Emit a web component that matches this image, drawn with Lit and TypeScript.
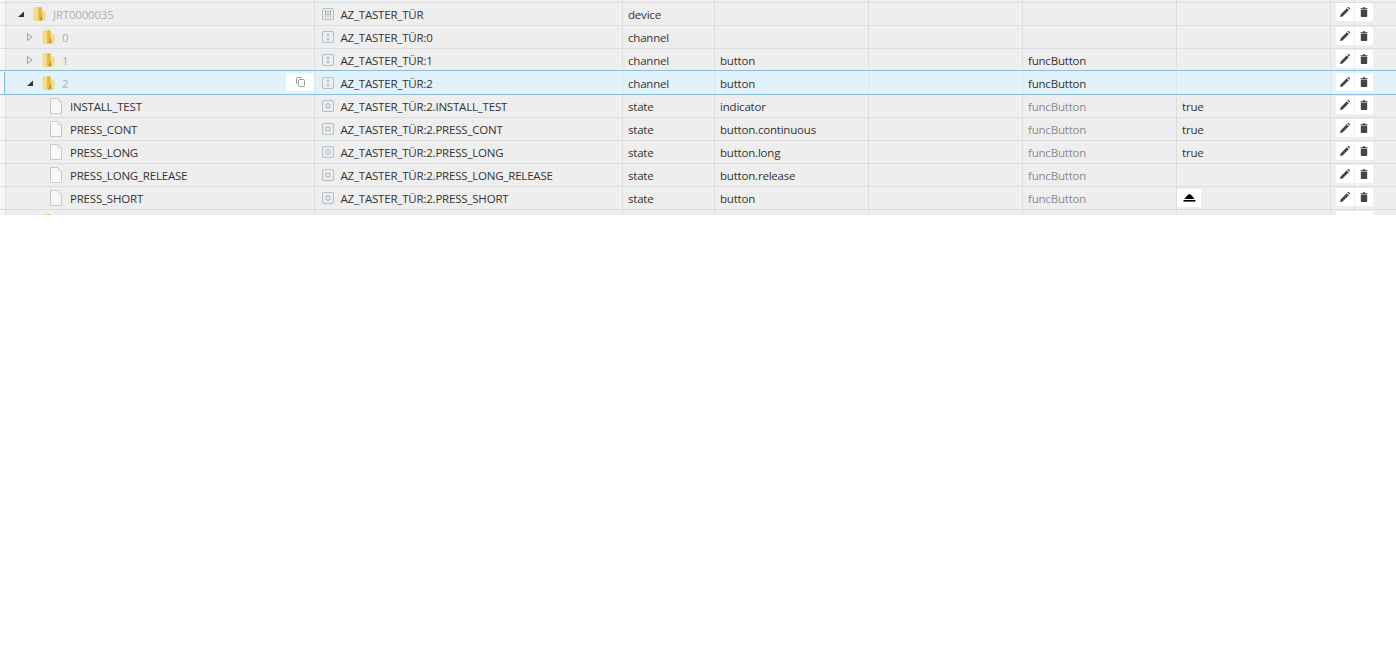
import { LitElement, html, css, svg } from "lit";
import { customElement } from "lit/decorators.js";

type Row = {
  level: number; kind: "device" | "folder" | "file"; open?: boolean; name: string;
  id: string; icon?: "device" | "channel" | "state"; type: string; role: string; func: string; dimFunc?: boolean; val: string;
  selected?: boolean; eject?: boolean;
};

const P = "AZ_TASTER_TÜR";
const rows: Row[] = [
  { level: 0, kind: "folder", open: true, name: "JRT0000035", id: P, icon: "device", type: "device", role: "", func: "", val: "" },
  { level: 1, kind: "folder", name: "0", id: P + ":0", icon: "channel", type: "channel", role: "", func: "", val: "" },
  { level: 1, kind: "folder", name: "1", id: P + ":1", icon: "channel", type: "channel", role: "button", func: "funcButton", val: "" },
  { level: 1, kind: "folder", open: true, name: "2", id: P + ":2", icon: "channel", type: "channel", role: "button", func: "funcButton", val: "", selected: true },
  { level: 2, kind: "file", name: "INSTALL_TEST", id: P + ":2.INSTALL_TEST", icon: "state", type: "state", role: "indicator", func: "funcButton", dimFunc: true, val: "true" },
  { level: 2, kind: "file", name: "PRESS_CONT", id: P + ":2.PRESS_CONT", icon: "state", type: "state", role: "button.continuous", func: "funcButton", dimFunc: true, val: "true" },
  { level: 2, kind: "file", name: "PRESS_LONG", id: P + ":2.PRESS_LONG", icon: "state", type: "state", role: "button.long", func: "funcButton", dimFunc: true, val: "true" },
  { level: 2, kind: "file", name: "PRESS_LONG_RELEASE", id: P + ":2.PRESS_LONG_RELEASE", icon: "state", type: "state", role: "button.release", func: "funcButton", dimFunc: true, val: "" },
  { level: 2, kind: "file", name: "PRESS_SHORT", id: P + ":2.PRESS_SHORT", icon: "state", type: "state", role: "button", func: "funcButton", dimFunc: true, val: "", eject: true },
  { level: 1, kind: "folder", name: "", id: "", type: "", role: "", func: "", val: "" },
];

const folder = svg`<svg class="ic" width="15" height="16" viewBox="0 0 15 17">
  <path d="M1 3.5 C1 2 2 1 3.5 1 L5 1 C6 1 6.5 2.5 6.5 3.5 L6.5 14 C6.5 15 5.5 16 4.5 16 L3 16 C1.5 16 1 14.5 1 13.5 Z" fill="#f3dc8a"/>
  <path d="M6 2 C7.5 .6 9.5 1 10 3 L10 15 C9 16.4 7 16.4 6 15 Z" fill="#e2b945"/>
  <path d="M10 5 C11.5 4.5 13.4 5 14 6.5 L14 13 C14 14.5 13 15.6 11.5 15.6 L9.5 15.6 Z" fill="#f2da88"/>
  <path d="M9.6 8 L10.6 15 L8.4 15 Z" fill="#a88a3a"/>
</svg>`;

const file = svg`<svg class="ic" width="12" height="16" viewBox="0 0 12 16">
  <path d="M.5 .5 H8 L11.5 4 V15.5 H.5 Z" fill="#f8f8f8" stroke="#c9c9c9"/>
  <path d="M8 .5 V4 H11.5" fill="none" stroke="#dcdcdc"/>
</svg>`;

const open = svg`<svg class="exp" width="8" height="8" viewBox="0 0 8 8"><path d="M7 1.5 V7 H1 Z" fill="#333"/></svg>`;
const closed = svg`<svg class="exp" width="8" height="8" viewBox="0 0 8 8"><path d="M1.5 .5 L6 4 L1.5 7.5 Z" fill="none" stroke="#a0a0a0"/></svg>`;

const typeIcon = (k?: string) => {
  const box = svg`<rect x=".5" y=".5" width="11" height="11" rx="1.5" fill="#e9eef0" stroke="#b4bec4"/>`;
  if (k === "device") return svg`<svg class="ti" width="12" height="12" viewBox="0 0 12 12">${box}
    <path d="M3.5 2.5V9.5M6 2.5V9.5M8.5 2.5V9.5" stroke="#76838b" stroke-dasharray="2 1"/></svg>`;
  if (k === "channel") return svg`<svg class="ti" width="12" height="12" viewBox="0 0 12 12">${box}
    <path d="M6 2.5V9.5" stroke="#8a969d" stroke-dasharray="3 1.5"/></svg>`;
  if (k === "state") return svg`<svg class="ti" width="12" height="12" viewBox="0 0 12 12">${box}
    <circle cx="6" cy="6" r="2.2" fill="none" stroke="#a8b2b8"/></svg>`;
  return "";
};

const pencil = svg`<svg width="10" height="10" viewBox="0 0 10 10"><path d="M0 10 L.6 7.4 L6.8 1.2 L8.8 3.2 L2.6 9.4 Z M7.4 .6 L8 0 Q8.4 -.2 8.8 0 L10 1.2 Q10.2 1.6 10 2 L9.4 2.6 Z" fill="#454545"/></svg>`;
const trash = svg`<svg width="8" height="10" viewBox="0 0 8 10"><path d="M.5 2 H7.5 V1.2 H5.4 L5 .2 H3 L2.6 1.2 H.5 Z M.8 2.6 H7.2 V9.2 Q7.2 10 6.4 10 H1.6 Q.8 10 .8 9.2 Z" fill="#454545"/></svg>`;
const copy = svg`<svg width="9" height="10" viewBox="0 0 9 10"><path d="M.5 7 V1.5 Q.5 .5 1.5 .5 H6" fill="none" stroke="#9a9a9a"/><rect x="2.5" y="2.5" width="6" height="7" rx="1" fill="none" stroke="#9a9a9a"/></svg>`;
const eject = svg`<svg width="13" height="8" viewBox="0 0 13 8"><path d="M1 5 C2.5 4.5 3.5 1 6.5 0 C9.5 1 10.5 4.5 12 5 Z" fill="#000"/><rect x=".5" y="6" width="12" height="1.6" fill="#000"/></svg>`;

@customElement("app-root")
export class AppRoot extends LitElement {
  static styles = css`
    :host { display: block; background: #fff; min-height: 648px; }
    .tree {
      height: 215px; overflow: hidden; background: #eeeeee;
      font: 11.5px/24px "Open Sans", "Noto Sans", sans-serif; letter-spacing: -0.2px; color: #333;
    }
    .row {
      display: grid; grid-template-columns: 5px 309px 308px 92px 154px 154px 154px 154px 1fr;
      height: 23px; box-sizing: border-box; border-top: 1px solid #dddddd;
    }
    .row.first { height: 2px; border-top: 0; }
    .row > div { box-sizing: border-box; border-left: 1px solid #dddddd; white-space: nowrap; overflow: hidden; min-width: 0; }
    .row > .gut { background: #f6f6f6; border-left: 0; }
    .row .pad { padding-left: 5px; }
    .row.sel {
      background: #e2f2fb; border-top-color: #e2f2fb; box-shadow: 0 1px 0 #8bbcd9, 0 -1px 0 #8bbcd9;
      position: relative;
    }
    .row.sel > .gut { background: #f6f6f6; }
    .row.sel > .name { box-shadow: -1px 0 0 #8bbcd9; }
    .row.sel > div { border-left-color: #d9e3e8; }
    .name { display: flex; align-items: center; position: relative; }
    .exp { flex: none; width: 8px; margin-right: 7px; }
    .noexp { flex: none; width: 15px; }
    .ic { flex: none; }
    .label { margin: 2px 0 0 6px; color: #b0b0b0; }
    .file .label { margin-left: 8px; color: #333; }
    .copy {
      position: absolute; right: 0; top: 1px; height: 18px; width: 28px; background: #fff;
      display: flex; align-items: center; justify-content: center;
    }
    .idc { display: flex; align-items: center; padding-left: 7px; }
    .ti { flex: none; margin-right: 6.5px; }
    .idt { margin-top: 2px; }
    .dim { color: #8c8c8c; }
    .valbtn {
      display: inline-flex; width: 24px; height: 18px; margin-top: 2px; background: #fff;
      align-items: center; justify-content: center; vertical-align: top; margin-left: -5px;
    }
    .acts { display: flex; gap: 1px; padding: 1px 0 0 5px; }
    .row.top .acts { padding-top: 0; }
    .btn {
      width: 18px; height: 18px; background: #fff; display: flex; align-items: center; justify-content: center;
    }
  `;

  render() {
    const cols = html`<div class="gut"></div><div></div><div></div><div></div><div></div><div></div><div></div><div></div><div></div>`;
    return html`<div class="tree">
      <div class="row first">${cols}</div>
      ${rows.map((r, i) => html`
        <div class="row ${r.selected ? "sel" : ""} ${i === 0 ? "top" : ""}">
          <div class="gut"></div>
          <div class="name ${r.kind}" style="padding-left:${11 + r.level * 9}px">
            ${r.kind === "file" ? html`<span class="noexp"></span>${file}`
              : html`${r.open ? open : closed}${folder}`}
            <span class="label">${r.name}</span>
            ${r.selected ? html`<span class="copy">${copy}</span>` : ""}
          </div>
          <div class="idc">${typeIcon(r.icon)}<span class="idt">${r.id}</span></div>
          <div class="pad">${r.type}</div>
          <div class="pad">${r.role}</div>
          <div class="pad"></div>
          <div class="pad ${r.dimFunc ? "dim" : ""}">${r.func}</div>
          <div class="pad">${r.eject ? html`<span class="valbtn">${eject}</span>` : r.val}</div>
          <div class="acts"><span class="btn">${pencil}</span><span class="btn">${trash}</span></div>
        </div>`)}
    </div>`;
  }
}
